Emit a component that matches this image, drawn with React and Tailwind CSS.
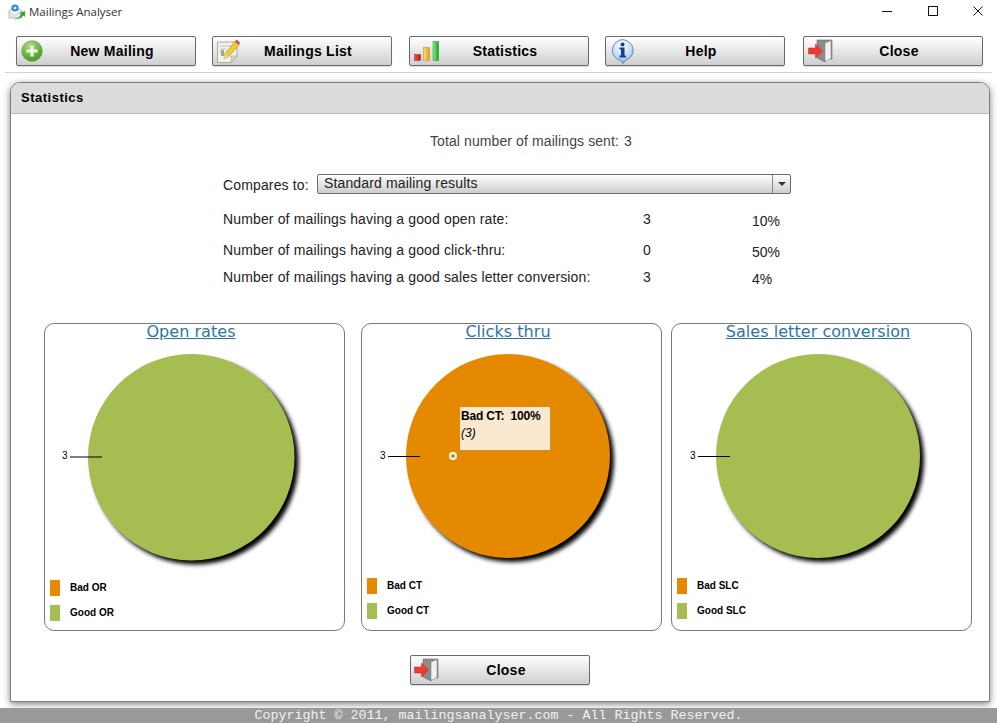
import React from "react";

const AppIcon = () => (
  <svg width="17" height="17" viewBox="0 0 17 17" className="block">
    <path d="M1 8 L8 3 L14 8 V15 H1 Z" fill="#e4e8ea" stroke="#9aa5ab" strokeWidth="0.7" />
    <path d="M1 8 L7 12 L14 8" fill="#fff" stroke="#b5bec3" strokeWidth="0.6" />
    <circle cx="7" cy="5" r="3.6" fill="#2f86c9" />
    <circle cx="7" cy="5" r="1.5" fill="#d9eefb" />
    <path d="M5 16 C9 16 12 14 13 11 L11 10 L17 8 L17 14 L15 12.6 C13 15 10 17 5 16 Z" fill="#3fa52c" />
  </svg>
);

const PlusIcon = () => (
  <svg width="24" height="24" viewBox="0 0 24 24" className="block">
    <defs>
      <radialGradient id="plusFill" cx="40%" cy="25%" r="85%">
        <stop offset="0" stopColor="#b5dc8c" />
        <stop offset="0.55" stopColor="#6fb343" />
        <stop offset="1" stopColor="#3f8f25" />
      </radialGradient>
    </defs>
    <circle cx="12" cy="12" r="10.3" fill="url(#plusFill)" stroke="#5a9a3c" strokeWidth="0.6" />
    <path d="M12 6.5 V17.5 M6.5 12 H17.5" stroke="#eef7e6" strokeWidth="3.2" />
  </svg>
);

const NoteIcon = () => (
  <svg width="24" height="26" viewBox="0 0 24 26" className="block">
    <path d="M1.5 4 H21 V18 L15 24.5 H1.5 Z" fill="#f3f1ec" stroke="#9b9b96" strokeWidth="0.8" />
    <path d="M21 18 L15 24.5 V18 Z" fill="#d8d6d0" stroke="#9b9b96" strokeWidth="0.6" />
    <path d="M4 8 H18 M4 11 H10 M4 14 H8" stroke="#c4c0b6" strokeWidth="1" />
    <path d="M5 12 H8 V18 H5 Z" fill="#8fb48a" />
    <path d="M8 21 L9 15.5 L19 3.5 L23 7 L12.5 18.8 Z" fill="#f2c92f" stroke="#b08a17" strokeWidth="0.6" />
    <path d="M8 21 L9 15.5 L12.5 18.8 Z" fill="#e8d8b0" />
    <path d="M19 3.5 L20.6 1.6 L24 4.8 L23 7 Z" fill="#d9414a" />
  </svg>
);

const BarsIcon = () => (
  <svg width="25" height="20" viewBox="0 0 25 20" className="block">
    <defs>
      <linearGradient id="barRed" x1="0" x2="1" y1="0" y2="0">
        <stop offset="0" stopColor="#f05a5a" />
        <stop offset="1" stopColor="#b81414" />
      </linearGradient>
      <linearGradient id="barAmber" x1="0" x2="1" y1="0" y2="0">
        <stop offset="0" stopColor="#f7dc8c" />
        <stop offset="1" stopColor="#e4a50f" />
      </linearGradient>
      <linearGradient id="barGreen" x1="0" x2="1" y1="0" y2="0">
        <stop offset="0" stopColor="#8aee8a" />
        <stop offset="1" stopColor="#0eaa1e" />
      </linearGradient>
    </defs>
    <rect x="0.5" y="13.5" width="6" height="6" fill="url(#barRed)" stroke="#8f1f1f" strokeWidth="0.5" />
    <rect x="9.5" y="6.5" width="6" height="13" fill="url(#barAmber)" stroke="#b98a1c" strokeWidth="0.5" />
    <rect x="19" y="0.5" width="5.5" height="19" fill="url(#barGreen)" stroke="#2a8a2a" strokeWidth="0.5" />
  </svg>
);

const InfoIcon = () => (
  <svg width="25" height="25" viewBox="0 0 25 25" className="block">
    <defs>
      <radialGradient id="infoFill" cx="45%" cy="25%" r="80%">
        <stop offset="0" stopColor="#ffffff" />
        <stop offset="0.6" stopColor="#c5dcf3" />
        <stop offset="1" stopColor="#6f9fd6" />
      </radialGradient>
    </defs>
    <path d="M12.5 0.5 A11.5 10.8 0 0 1 15 21.6 L13 24.6 L11 21.7 A11.5 10.8 0 0 1 12.5 0.5 Z" fill="url(#infoFill)" stroke="#4a79b5" strokeWidth="0.8" />
    <circle cx="12.5" cy="5.5" r="2" fill="#123f96" />
    <path d="M9.5 8.5 H14.5 V16.5 H16 V18.5 H9.5 V16.5 H11 V10.5 H9.5 Z" fill="#123f96" />
  </svg>
);

const DoorIcon = () => (
  <svg width="25" height="24" viewBox="0 0 25 24" className="block">
    <path d="M9 1 H24 V20 H17 V23 L9 19 Z" fill="#8c8c8c" stroke="#6d6d6d" strokeWidth="0.6" />
    <path d="M17 4 L23 1.5 V19.5 L17 22.5 Z" fill="#f1f1f1" stroke="#8a8a8a" strokeWidth="0.6" />
    <path d="M0.5 9 H7.5 V5 L14.5 12 L7.5 19 V15 H0.5 Z" fill="#ee3a34" stroke="#c22723" strokeWidth="0.5" />
  </svg>
);

const ToolButton = ({ icon, label, className = "" }) => (
  <button className={`relative flex h-[30px] w-[180px] items-center justify-center rounded-[2px] border border-[#6b6b6b] bg-gradient-to-b from-white to-[#cfcfcf] pl-3 text-[14px] font-bold tracking-[0.25px] text-black shadow-[0_1px_1px_#d8d8d8] ${className}`}>
    <span className="absolute left-[3px] top-0 flex h-full items-center">{icon}</span>
    {label}
  </button>
);

const StatRow = ({ label, count, pct, className }) => (
  <div className={`grid h-5 grid-cols-[420px_109px_1fr] text-[14px] leading-5 text-[#222] ${className}`}>
    <span className="tracking-[0.14px]">{label}</span>
    <span>{count}</span>
    <span className="pt-0.5">{pct}</span>
  </div>
);

const Pie = ({ color, cx, cy, r, lineX, lineY, idx }) => (
  <svg width="299" height="230" viewBox="0 0 299 230" className="block">
    <defs>
      <filter id={`pieShadow${idx}`} x="-20%" y="-20%" width="140%" height="140%">
        <feGaussianBlur stdDeviation="2.2" />
      </filter>
    </defs>
    <circle cx={cx + 4} cy={cy + 4} r={r} fill="#000" filter={`url(#pieShadow${idx})`} />
    <circle cx={cx} cy={cy} r={r} fill={color} />
    <line x1={lineX} x2={lineX + 32} y1={lineY} y2={lineY} stroke="#000" strokeWidth="1" />
    <text x={lineX - 8} y={lineY + 2} fontSize="10" fill="#000" fontFamily="'Liberation Sans', sans-serif">3</text>
  </svg>
);

const ChartCard = ({ title, color, legend, cx, cy, r, lineX, lineY, legendTop, idx, className = "", children }) => (
  <div className={`relative h-[308px] w-[301px] shrink-0 rounded-[10px] border border-[#7a7a7a] bg-white ${className}`}>
    <div className="h-[16px] pr-[7px] text-center font-['DejaVu_Sans',sans-serif] text-[16px] leading-[16px] tracking-[0.05px] text-[#2b76a6] underline">
      {title}
    </div>
    <Pie color={color} cx={cx} cy={cy} r={r} lineX={lineX} lineY={lineY} idx={idx} />
    <div className={`flex flex-col gap-[9px] pl-[5px] ${legendTop}`}>
      {legend.map((item) => (
        <div key={item.label} className="flex h-4 items-center gap-[10px]">
          <span className="h-4 w-[10px]" style={{ backgroundColor: item.color }} />
          <span className="pb-0.5 font-['Liberation_Sans',sans-serif] text-[10px] font-bold text-black">{item.label}</span>
        </div>
      ))}
    </div>
    {children}
  </div>
);

export default function App() {
  const orange = "#e58900";
  const green = "#a6bd51";

  return (
    <div className="flex h-[723px] w-[997px] flex-col overflow-hidden bg-white font-['Liberation_Sans',Arial,sans-serif]">
      {/* title bar */}
      <div className="flex h-[36px] shrink-0 items-start">
        <div className="ml-2 mt-[3px]"><AppIcon /></div>
        <span className="ml-1 mt-[4px] font-['Open_Sans',sans-serif] text-[11.5px] leading-4 text-[#333]">Mailings Analyser</span>
        <div className="ml-auto mr-[14px] mt-[6px] flex items-center gap-[35px]">
          <svg width="10" height="10" viewBox="0 0 10 10" className="mr-px"><path d="M0 5.5 H10" stroke="#111" /></svg>
          <svg width="10" height="10" viewBox="0 0 10 10"><rect x="0.5" y="0.5" width="9" height="9" fill="none" stroke="#111" /></svg>
          <svg width="10" height="10" viewBox="0 0 10 10"><path d="M0.5 0.5 L9.5 9.5 M9.5 0.5 L0.5 9.5" stroke="#111" /></svg>
        </div>
      </div>

      {/* toolbar */}
      <div className="flex shrink-0 gap-4 pl-4">
        <ToolButton icon={<PlusIcon />} label="New Mailing" />
        <ToolButton icon={<NoteIcon />} label="Mailings List" />
        <ToolButton icon={<span className="ml-px"><BarsIcon /></span>} label="Statistics" className="ml-px" />
        <ToolButton icon={<span className="ml-px"><InfoIcon /></span>} label="Help" />
        <ToolButton icon={<span className="ml-px"><DoorIcon /></span>} label="Close" className="ml-0.5" />
      </div>
      <div className="ml-[5px] mr-[5px] mt-[6px] h-px shrink-0 bg-[#cfd3d3]" />

      {/* panel */}
      <div className="ml-[10px] mt-[9px] h-[620px] w-[980px] shrink-0 rounded-t-[10px] border border-[#7f7f7f] bg-white shadow-[0_2px_7px_rgba(0,0,0,0.5)]">
        <div className="flex h-[31px] items-center rounded-t-[9px] border-b border-[#bdbdbd] bg-[#dcdcdc] pl-[10px] text-[13px] font-bold tracking-[0.5px] text-black">
          Statistics
        </div>

        <div className="mt-[17px] flex h-5 items-center pl-[419px] text-[14px] leading-5 tracking-[0.1px] text-[#444]">
          <span>Total number of mailings sent:</span>
          <span className="ml-[5px]">3</span>
        </div>

        <div className="ml-[212px] mt-[23px] w-[568px]">
          <div className="flex h-5 items-start text-[14px] tracking-[0.14px] text-[#222]">
            <span className="w-[94px] pt-[1px] leading-5">Compares to:</span>
            <div className="flex h-5 w-[474px] items-center rounded-[2px] border border-[#6b6b6b] bg-gradient-to-b from-white to-[#cdcdcd] pl-[6px] leading-4">
              <span className="-mt-0.5 flex-1">Standard mailing results</span>
              <span className="flex h-full w-[18px] items-center justify-center border-l border-[#8a8a8a]">
                <svg width="8" height="4" viewBox="0 0 8 4" className="block"><path d="M0 0 H8 L4 4 Z" fill="#333" /></svg>
              </span>
            </div>
          </div>

          <StatRow className="mt-[15px]" label="Number of mailings having a good open rate:" count="3" pct="10%" />
          <StatRow className="mt-[11px]" label="Number of mailings having a good click-thru:" count="0" pct="50%" />
          <StatRow className="mt-[7px]" label="Number of mailings having a good sales letter conversion:" count="3" pct="4%" />
        </div>

        <div className="ml-[33px] mt-[36px] flex">
          <ChartCard
            idx={1}
            title="Open rates"
            color={green}
            cx={146.25}
            cy={117.25}
            r={103.25}
            lineX={25}
            lineY={117}
            legendTop="pt-[10px]"
            legend={[
              { label: "Bad OR", color: orange },
              { label: "Good OR", color: green },
            ]}
          />
          <ChartCard
            idx={2}
            className="ml-4"
            title="Clicks thru"
            color={orange}
            cx={146}
            cy={116}
            r={102}
            lineX={26}
            lineY={116.5}
            legendTop="pt-[8px]"
            legend={[
              { label: "Bad CT", color: orange },
              { label: "Good CT", color: green },
            ]}
          >
            {/* chart tooltip */}
            <div className="absolute left-[98px] top-[83px] h-[43px] w-[90px] bg-[#fae8d0] pl-px pt-px text-[12px] leading-[17px] text-black shadow-[1px_1px_0_#cf8f3a]">
              <div className="font-bold tracking-[-0.2px]">Bad CT:&nbsp; 100%</div>
              <div className="italic">(3)</div>
            </div>
            <span className="absolute left-[87px] top-[128px] h-2 w-2 rounded-full border-2 border-white" />
          </ChartCard>
          <ChartCard
            idx={3}
            className="ml-[9px]"
            title="Sales letter conversion"
            color={green}
            cx={146}
            cy={116}
            r={102}
            lineX={26}
            lineY={116.5}
            legendTop="pt-[8px]"
            legend={[
              { label: "Bad SLC", color: orange },
              { label: "Good SLC", color: green },
            ]}
          />
        </div>

        <div className="mt-[24px] pl-[399px]">
          <ToolButton icon={<DoorIcon />} label="Close" />
        </div>
      </div>

      {/* footer */}
      <div className="mt-[6px] flex-1 overflow-hidden bg-[#999] text-center font-['Liberation_Mono',monospace] text-[13.33px] leading-[15px] text-[#f2f2f2]">
        Copyright © 2011, mailingsanalyser.com - All Rights Reserved.
      </div>
    </div>
  );
}
